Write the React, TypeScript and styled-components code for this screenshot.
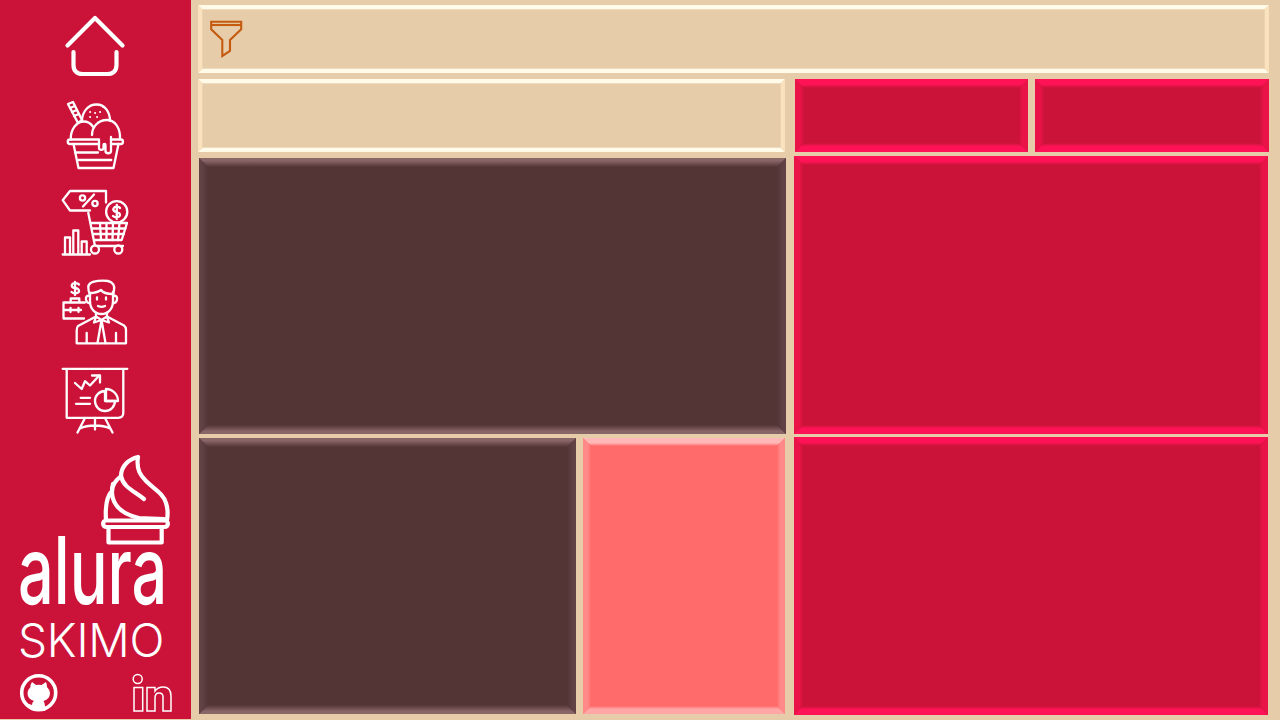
import React from "react";
import styled, { createGlobalStyle } from "styled-components";

const Global = createGlobalStyle`
  html, body { margin: 0; padding: 0; background: #e6cca9; overflow: hidden; }
  #root { width: 1280px; height: 720px; }
`;

const Page = styled.div`
  display: flex;
  width: 1280px;
  height: 720px;
  background: #e6cca9;
`;

const Sidebar = styled.aside`
  width: 191px;
  height: 719px;
  flex: none;
  display: flex;
  flex-direction: column;
  background: #cb133a;
  color: #fff;
  box-sizing: border-box;
`;

const Nav = styled.nav`
  display: flex;
  flex-direction: column;
  align-items: center;
  padding: 11px 1px 0 0;
  gap: 18.5px;
`;

const NavIcon = styled.svg<{ $weight?: number }>`
  display: block;
  width: 70px;
  height: 70px;
  fill: none;
  stroke: #fff;
  stroke-width: ${(p) => p.$weight ?? 2.3};
  stroke-linecap: round;
  stroke-linejoin: round;
`;

const Brand = styled.div`
  display: flex;
  flex-direction: column;
  padding: 0 20px;
`;

const Cupcake = styled.svg`
  display: block;
  align-self: flex-end;
  width: 72px;
  height: 92px;
  margin-top: 19px;
  fill: none;
  stroke: #fff;
  stroke-width: 4.2;
  stroke-linecap: round;
  stroke-linejoin: round;
`;

const Alura = styled.div`
  font-family: Inter, "Liberation Sans", sans-serif;
  font-weight: 500;
  font-size: 94px;
  line-height: 76px;
  height: 76px;
  margin: -14px 0 0 -2px;
  transform: scaleX(0.67);
  transform-origin: left center;
  white-space: nowrap;
`;

const Skimo = styled.div`
  font-family: Inter, "Liberation Sans", sans-serif;
  font-weight: 300;
  font-size: 46px;
  line-height: 46px;
  margin: 9px 0 0 -2px;
  letter-spacing: -0.2px;
  white-space: nowrap;
`;

const Social = styled.div`
  display: flex;
  justify-content: space-between;
  align-items: flex-end;
  padding: 0 19px;
  margin-top: 10px;
`;

const SocialIcon = styled.svg<{ $weight?: number }>`
  display: block;
  width: 40px;
  height: 40px;
  fill: none;
  stroke: #fff;
  stroke-width: ${(p) => p.$weight ?? 1.5};
`;

const Main = styled.main`
  flex: 1;
  display: flex;
  flex-direction: column;
  padding: 5px 11px 0 7px;
`;

const Row = styled.div`
  display: flex;
  gap: 7px;
  margin-top: 6px;
  height: 73px;
`;

const RowSpacer = styled.div`
  width: 3px;
  flex: none;
  margin-left: -7px;
`;

const Columns = styled.div`
  display: flex;
  margin-top: 4px;
  height: 559px;
`;

const LeftColumn = styled.div`
  display: flex;
  flex-direction: column;
  width: 587px;
  margin: 2px 0 1px 1px;
  gap: 4px;
`;

const RightColumn = styled.div`
  display: flex;
  flex-direction: column;
  width: 474px;
  margin-left: 8px;
  gap: 3px;
`;

const SubRow = styled.div`
  display: flex;
  gap: 7px;
  height: 276px;
`;

type Tone = { base: string; top: string; bottom: string; side: string; size: number; fade: string };

const tones: Record<string, Tone> = {
  cream: { base: "#e6cca9", top: "#fffbe8", bottom: "#fffbe8", side: "#fae2bf", size: 5, fade: "70%" },
  red: { base: "#cb133a", top: "#ff1356", bottom: "#ff1356", side: "#ea1347", size: 9, fade: "60%" },
  brown: { base: "#543536", top: "#886567", bottom: "#886567", side: "#624345", size: 9, fade: "30%" },
  salmon: { base: "#ff6b6b", top: "#ffb8b8", bottom: "#ffa6a6", side: "#ff8888", size: 8, fade: "62%" },
};

const Panel = styled.section<{ $tone: Tone; $width?: number; $grow?: boolean }>`
  position: relative;
  box-sizing: border-box;
  background: ${(p) => p.$tone.base};
  ${(p) => (p.$width ? `width: ${p.$width}px; flex: none;` : "")}
  ${(p) => (p.$grow ? "flex: 1;" : "")}

  &::before,
  &::after {
    content: "";
    position: absolute;
    inset: 0;
    pointer-events: none;
    background-repeat: no-repeat;
  }

  &::before {
    background-image:
      linear-gradient(to bottom, ${(p) => p.$tone.top} ${(p) => p.$tone.fade}, ${(p) => p.$tone.base}),
      linear-gradient(to top, ${(p) => p.$tone.bottom} ${(p) => p.$tone.fade}, ${(p) => p.$tone.base});
    background-size: 100% ${(p) => p.$tone.size}px;
    background-position: top, bottom;
    clip-path: polygon(
      0 0,
      100% 0,
      calc(100% - ${(p) => p.$tone.size}px) ${(p) => p.$tone.size}px,
      ${(p) => p.$tone.size}px ${(p) => p.$tone.size}px,
      0 0,
      0 100%,
      100% 100%,
      calc(100% - ${(p) => p.$tone.size}px) calc(100% - ${(p) => p.$tone.size}px),
      ${(p) => p.$tone.size}px calc(100% - ${(p) => p.$tone.size}px),
      0 100%
    );
  }

  &::after {
    background-image:
      linear-gradient(to right, ${(p) => p.$tone.side} ${(p) => p.$tone.fade}, ${(p) => p.$tone.base}),
      linear-gradient(to left, ${(p) => p.$tone.side} ${(p) => p.$tone.fade}, ${(p) => p.$tone.base});
    background-size: ${(p) => p.$tone.size}px 100%;
    background-position: left, right;
    clip-path: polygon(
      0 0,
      ${(p) => p.$tone.size}px ${(p) => p.$tone.size}px,
      ${(p) => p.$tone.size}px calc(100% - ${(p) => p.$tone.size}px),
      0 100%,
      0 0,
      100% 0,
      100% 100%,
      calc(100% - ${(p) => p.$tone.size}px) calc(100% - ${(p) => p.$tone.size}px),
      calc(100% - ${(p) => p.$tone.size}px) ${(p) => p.$tone.size}px,
      100% 0
    );
  }
`;

const FilterBar = styled(Panel)`
  height: 68px;
  display: flex;
  align-items: center;
  padding-left: 11px;
`;

const FilterIcon = styled.svg`
  display: block;
  width: 34px;
  height: 38px;
  fill: none;
  stroke: #c55a11;
  stroke-width: 2.1;
`;

export default function App() {
  return (
    <Page>
      <Global />
      <Sidebar>
        <Nav>
          <NavIcon viewBox="60 11 70 70" $weight={4.2}>
            <path d="M67.500 45.500 95 18 122.500 45.500" />
            <path d="M73.5 52v13c0 6 3.500 9 9 9h25c5.500 0 9-3 9-9V52" />
          </NavIcon>
          <NavIcon viewBox="60 100 70 70">
            <path d="M82 121c0-9 6-16.500 14.500-16.500S110 112 110 121" />
            <path d="M70.800 139.500c-.500-9 5-18 13-18 3 0 7 2 9 5" />
            <path d="M92 135c0-8 6-15 15-15 8 0 13.500 8 13 19" />
            <path d="M70 139.500h29v4.500H70c-3 0-3-4.500 0-4.500Z" />
            <path d="M111 139.500h10c2.600 0 2.600 4.500 0 4.500h-10" />
            <path d="M73.500 144 78.500 168h35l5-24" />
            <path d="M75 152.500h23M78.300 160h33" />
            <path d="M99 144v4c0 2.500 4.500 2.500 4.500 0v-3c0-1.500 2-1.500 2 0v6c0 3 5.500 3 5.500 0v-14" />
            <path d="M68 104l5-2 9 18-4 3Z" />
            <path d="M70 108l5-2M72 112l5-2M74 116l5-2" />
            <path d="M90 112h.2M95 113h.2M100 112h.2M97 117h.2M90 117h.2M103 107h.2" strokeWidth="1.800" />
          </NavIcon>
          <NavIcon viewBox="60 188.500 70 70">
            <path d="M62.700 200.700 70 191.500h36v11.500M90 211h-20l-7.300-10.300" />
            <path d="m83 207 11-12" />
            <circle cx="82.500" cy="198.500" r="2.600" />
            <circle cx="95" cy="204" r="2.600" />
            <circle cx="116.700" cy="212.300" r="10.600" />
            <path d="M120 208.500c-1-1.500-5-2-6.200 0-1.600 2.500 1 3.600 3 4 2 .500 3.800 1.800 3 3.800-1 2-5 2-6.800.200M116.800 205.500v14" />
            <path d="M88.300 213.500 95 246.500h28M91.700 223.500H127l-5.300 17H94.300" />
            <path d="M92.500 229h33M94 234.500h30M100 223.500l1 17M106.500 223.500v17M113 223.500l-.5 17M119.500 223.500l-1.500 17" />
            <circle cx="95" cy="250" r="4" fill="#cb133a" />
            <circle cx="118.300" cy="250" r="4" fill="#cb133a" />
            <path d="M62.700 255H90M65 255v-17h5v17M73.300 255v-24h5v24M81.700 255v-13h5v13" />
          </NavIcon>
          <NavIcon viewBox="60 277 70 70">
            <path d="M90 295c-2-5-3-9 0-11.500 3-2.500 12-3.500 18-2.500 5 1 7 5 6 9l-1 6" />
            <path d="M90 293c5 0 8-1 11-3 2 3 6 4 12 4" />
            <path d="M90 293v8c0 8 5 13 11.500 13S113 309 113 301v-9" />
            <path d="M90 296c-3-1-4.500 1-4 3.500s2 4 4 3.500M113 296c3-1 4.500 1 4 3.500s-2 4-4 3.500" />
            <path d="M97 297.500v2M106 297.500v2M98 306c2 1 5 1 7 0" />
            <path d="M96 313v3.500l-18 9.500c-1 1-1.300 3-1.300 4.500V343.300h49.300V330c0-2-.500-3.500-2-4.500l-17-9V313" />
            <path d="M96 316.500 101.500 320l5.500-3.500M96 316.500l-2 6 7.500-2.500 7.500 2.500-2-6" />
            <path d="M101.500 320 97.500 343M101.500 320l4 23M86.700 333v10M116 333v10" />
            <path d="M84 318.500H63.500v-16H85M70.700 302.500v-4h8.600v4M63.500 310H81M70.500 308v4M78.500 308v4" />
            <path d="M79 284.500c-1-1.500-6-2-7 0s.500 3 3 3.500 4.500 1.500 4 3.500-5.500 2.500-7.500.500M75 282v13" />
          </NavIcon>
          <NavIcon viewBox="60 365.500 70 70">
            <path d="M62.700 369.300h64.600M66.700 369.300v49h51.600c3 0 5-2 5-5v-44" />
            <path d="M85 418.500 77.500 433M105 418.500l7.500 14.500M95 418.500V430M80 429c8-4 22-4 30 0" />
            <path d="M75 383.500l6.700 6 3.300-7.800 5 4.300 9.300-10" />
            <path d="M92 376h8v7" />
            <path d="M80.700 398.300H90M76 404.300H90" />
            <path d="M105 391.500a10 10 0 1 0 10 10h-10Z" />
            <path d="M106 389.500a12 12 0 0 1 12 12h-12Z" />
          </NavIcon>
        </Nav>
        <Brand>
          <Cupcake viewBox="100 454 72 92">
            <path d="M107 520c-1-15 1-24 6-29 0-5 3-10 9-15 0-10 8-17 17-19 -2 13 3 19 8 24 8 8 17 12 20 22 2 6 2 11 1 17" />
            <path d="M122 476c2 11 13 15 23 23" />
            <path d="M114 484c-4 16 4 29 26 34l25 1" />
            <path d="M107.500 520.500h58c4.500 0 4.500 6.500 0 6.500h-58c-4.500 0-4.500-6.500 0-6.500Z" />
            <path d="M109.500 527v15.500h53.200V527" />
          </Cupcake>
          <Alura>alura</Alura>
          <Skimo>SKIMO</Skimo>
        </Brand>
        <Social>
          <SocialIcon viewBox="19 672 40 40" $weight={3.6}>
            <circle cx="38.700" cy="691.700" r="17" />
            <path
              fill="#fff"
              stroke="none"
              d="M32 681l4 3q2.700-.5 5.500 0l4.500-3q1 3 1 5 3 3 3 6 0 6-6.500 8 1.500 2 1.500 5v5H33v-4q-5 1-7-4 3 1 6 2 0-3 2-4-6.500-2-6.500-8 0-3 3-6-.5-2 1.500-5Z"
            />
          </SocialIcon>
          <SocialIcon viewBox="132 672 40 40">
            <circle cx="137.700" cy="678" r="4.500" />
            <path d="M134 686.500h8.700V710H134Z" />
            <path d="M147 686.500h8v3.500q3-4 8-4 8 0 8 9v15h-8v-14q0-4-4-4-4 0-4 5v13h-8Z" />
          </SocialIcon>
        </Social>
      </Sidebar>
      <Main>
        <FilterBar $tone={tones.cream}>
          <FilterIcon viewBox="209 20 34 38">
            <path d="M211.200 21.700h30v7.600l-11.200 10.700v11l-7.700 5V40l-11.100-10.700Z" />
            <path d="M211.200 25h30" />
          </FilterIcon>
        </FilterBar>
        <Row>
          <Panel $tone={tones.cream} $width={587} />
          <RowSpacer />
          <Panel $tone={tones.red} $width={233} />
          <Panel $tone={tones.red} $width={234} />
        </Row>
        <Columns>
          <LeftColumn>
            <Panel $tone={tones.brown} $grow />
            <SubRow>
              <Panel $tone={tones.brown} $width={377} />
              <Panel $tone={tones.salmon} $width={202} />
            </SubRow>
          </LeftColumn>
          <RightColumn>
            <Panel $tone={tones.red} $grow />
            <Panel $tone={tones.red} $grow />
          </RightColumn>
        </Columns>
      </Main>
    </Page>
  );
}
